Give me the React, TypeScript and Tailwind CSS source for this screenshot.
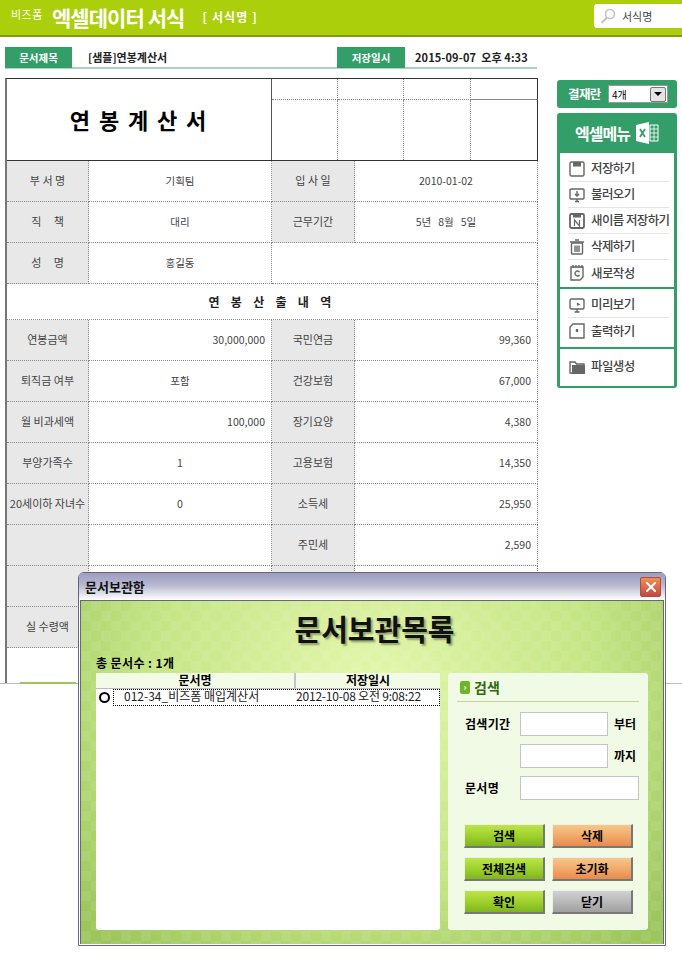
import type { ReactNode } from "react";
import { X } from "lucide-react";

const font = "font-['Noto_Sans_CJK_KR','Liberation_Sans',sans-serif]";

function Label({ children }: { children?: ReactNode }) {
  return (
    <div className="flex items-center justify-center border-r border-b border-dotted border-[#888] bg-[#e8e8e8] pb-[1px] text-[11px] whitespace-pre text-[#444]">
      {children}
    </div>
  );
}

function Value({ children, right }: { children?: ReactNode; right?: boolean }) {
  return (
    <div
      className={`flex items-center border-r border-b border-dotted border-[#888] pb-[1px] text-[10.5px] whitespace-pre text-[#444] ${
        right ? "justify-end pr-[6px]" : "justify-center"
      }`}
    >
      {children}
    </div>
  );
}

function MenuIcon({ name }: { name: string }) {
  const c = "#666";
  return (
    <svg width="18" height="18" viewBox="0 0 18 18" fill="none" stroke={c} strokeWidth="1.4" className="shrink-0">
      {name === "save" && (
        <>
          <rect x="2" y="2" width="14" height="14" rx="1.5" />
          <rect x="5" y="2" width="8" height="4.5" fill={c} stroke="none" />
        </>
      )}
      {name === "load" && (
        <>
          <rect x="2" y="3" width="14" height="10" rx="1" />
          <path d="M7 15.5h4M9 13v2.5M9 5v4.5M7 8l2 2 2-2" />
        </>
      )}
      {name === "saveas" && (
        <>
          <rect x="2" y="2" width="14" height="14" rx="1.5" strokeWidth="1.8" />
          <rect x="5" y="2" width="8" height="3.5" fill={c} stroke="none" />
          <path d="M6.5 14V8l5 6V8" strokeWidth="1.2" />
        </>
      )}
      {name === "trash" && (
        <>
          <rect x="3.5" y="5" width="11" height="11" rx="1" />
          <path d="M2 4h14M7 2h4M7 7.5v6.5M9 7.5v6.5M11 7.5v6.5" />
        </>
      )}
      {name === "new" && (
        <>
          <path d="M3 3h12v10l-3 3H3z" />
          <path d="M5 1v3M8 1v3M11 1v3M14 1v3M11.5 8a2.5 2.5 0 1 0 0 3" />
        </>
      )}
      {name === "preview" && (
        <>
          <rect x="2" y="3" width="14" height="10" rx="1.5" />
          <path d="M6.5 16h5M9 13v3M9 7l2 1.5-2 .5" />
        </>
      )}
      {name === "print" && (
        <>
          <path d="M5 2h11v14H2V5z" />
          <path d="M9 7v3" strokeWidth="2.4" />
        </>
      )}
      {name === "folder" && (
        <>
          <path d="M2 15V4h5l1.5 2H16v9z" fill="none" />
          <path d="M4 7h13v9H4z" fill={c} stroke="none" />
        </>
      )}
    </svg>
  );
}

function MenuRow({ icon, label, line }: { icon: string; label: string; line?: boolean }) {
  return (
    <div className="mx-[5px] flex h-[26px] items-center pl-[3px] text-[12.5px] font-medium tracking-[-0.6px] whitespace-nowrap text-[#444]">
      <div className={`flex h-full w-full items-center gap-[5px] ${line ? "border-b border-[#e4e4e4]" : ""}`}>
        <MenuIcon name={icon} />
        <span>{label}</span>
      </div>
    </div>
  );
}

function DialogButton({ label, tone }: { label: string; tone: "green" | "orange" | "gray" }) {
  const tones = {
    green: "bg-[linear-gradient(#bde548,#9ccf2c_55%,#7fb61d)]",
    orange: "bg-[linear-gradient(#f6c88a,#f0a868_55%,#ea8a4c)]",
    gray: "bg-[linear-gradient(#d2d2d2,#b6b6b6_55%,#a0a0a0)]",
  };
  return (
    <div
      className={`flex h-[24px] w-[81px] items-center justify-center border-t border-r-2 border-b-2 border-l border-t-[#eee] border-r-[#777] border-b-[#777] border-l-[#eee] text-[12px] font-bold text-black ${tones[tone]}`}
    >
      {label}
    </div>
  );
}

function SearchField({ label, unit, wide }: { label?: string; unit?: string; wide?: boolean }) {
  return (
    <div className="flex h-[24px] items-center text-[12px] font-bold text-black">
      <span className="w-[63px] pl-[8px] tracking-[0.3px] whitespace-nowrap">{label}</span>
      <div className={`h-[24px] border border-[#c4c4c4] bg-white ${wide ? "w-[120px]" : "w-[88px]"}`} />
      {unit && <span className="ml-[6px]">{unit}</span>}
    </div>
  );
}

export default function App() {
  const rows: [string, string, boolean, string, string][] = [
    ["연봉금액", "30,000,000", true, "국민연금", "99,360"],
    ["퇴직금 여부", "포함", false, "건강보험", "67,000"],
    ["월 비과세액", "100,000", true, "장기요양", "4,380"],
    ["부양가족수", "1", false, "고용보험", "14,350"],
    ["20세이하 자녀수", "0", false, "소득세", "25,950"],
    ["", "", false, "주민세", "2,590"],
    ["", "", false, "", ""],
    ["실 수령액", "", false, "", ""],
  ];

  return (
    <div className={`relative h-[962px] w-[682px] overflow-hidden bg-white ${font}`}>
      <div className="h-[684px] overflow-hidden border-b border-[#bbb]">
        {/* header */}
        <header className="flex h-[37px] items-start justify-between border-b-[2px] border-b-[#7f9a10] bg-[#abcf0a] text-white">
          <div className="flex items-center pt-[1px] pl-[11px]">
            <span className="mb-[6px] w-[41px] text-[11px] tracking-[0.5px]">비즈폼</span>
            <span className="text-[21px] leading-[32px] font-bold tracking-[-0.95px]">엑셀데이터 서식</span>
            <span className="ml-[18px] text-[12px] font-bold tracking-[1.1px] whitespace-pre">[ 서식명 ]</span>
          </div>
          <div className="mt-[4px] flex h-[24px] w-[88px] items-center gap-[6px] rounded-l-[3px] bg-white pl-[6px] text-[11px] text-[#444]">
            <svg width="16" height="16" viewBox="0 0 16 16" fill="none" stroke="#c4c4c4" strokeWidth="1.6">
              <circle cx="10" cy="6" r="4.5" />
              <path d="M7 9.5 1.5 15" strokeWidth="2.2" />
            </svg>
            <span>서식명</span>
          </div>
        </header>

        <div className="flex">
          <main className="w-[538px] shrink-0 pl-[5px]">
            {/* document bar */}
            <div className="mt-[10px] flex h-[22px] w-[532px] border-b-2 border-[#a5d5bb] text-[11px] font-bold">
              <div className="flex h-[21px] w-[67px] items-center justify-center bg-[#339e68] text-[10.5px] text-white">문서제목</div>
              <div className="ml-[16px] flex w-[249px] items-center text-[#222]">[샘플]연봉계산서</div>
              <div className="flex h-[21px] w-[68px] items-center justify-center bg-[#339e68] text-[10.5px] text-white">저장일시</div>
              <div className="ml-[10px] flex items-center tracking-[0.1px] whitespace-pre text-[#222]">2015-09-07  오후 4:33</div>
            </div>

            {/* form */}
            <div className="mt-[9px] w-[533px] border-t border-l-2 border-t-[#333] border-l-[#777]">
              <div className="grid h-[82px] grid-cols-[265px_266px] border-b border-[#333]">
                <div className="flex items-center justify-center border-r border-[#555] text-[22px] font-bold tracking-[1.9px] whitespace-pre text-black">
                  연 봉 계 산 서
                </div>
                <div className="grid grid-cols-[66px_66px_67px_67px] grid-rows-[21px_1fr]">
                  {Array.from({ length: 8 }).map((_, i) => (
                    <div
                      key={i}
                      className={`border-dotted border-[#888] ${i % 4 === 3 ? "border-r border-solid border-r-[#333]" : "border-r"} ${i < 4 ? "border-b" : ""}`}
                    />
                  ))}
                </div>
              </div>

              <div className="grid grid-cols-[82px_183px_83px_183px] [grid-auto-rows:41px]">
                <Label>부 서 명</Label>
                <Value>기획팀</Value>
                <Label>입 사 일</Label>
                <Value>2010-01-02</Value>
                <Label>{"직     책"}</Label>
                <Value>대리</Value>
                <Label>근무기간</Label>
                <Value>5년   8월   5일</Value>
                <Label>{"성     명"}</Label>
                <Value>홍길동</Value>
                <div className="col-span-2 border-r border-b border-dotted border-[#888]" />
              </div>

              <div className="flex h-[36px] items-center justify-center border-r border-b border-dotted border-[#888] text-[12px] font-bold tracking-[4.3px] whitespace-pre text-[#222]">
                연 봉 산 출 내 역
              </div>

              <div className="grid grid-cols-[82px_183px_83px_183px] [grid-auto-rows:41px]">
                {rows.map((r, i) => (
                  <div key={i} className="contents">
                    <Label>{r[0]}</Label>
                    <Value right={r[2]}>{r[1]}</Value>
                    <Label>{r[3]}</Label>
                    <Value right>{r[4]}</Value>
                  </div>
                ))}
              </div>
              <div className="h-[40px] border-r border-[#555]" />
            </div>
          </main>

          {/* side menu */}
          <aside className="ml-[19px] w-[120px] pt-[43px]">
            <div className="flex h-[28px] items-center rounded-[3px] bg-[#339e68] pl-[11px] text-white">
              <span className="w-[40px] text-[12.5px] font-bold tracking-[-0.6px]">결재란</span>
              <div className="flex h-[18px] w-[60px] items-center justify-between border border-[#999] bg-white pr-[1px] pl-[3px] text-[10px] text-black">
                <span>4개</span>
                <div className="flex h-[15px] w-[16px] items-center justify-center rounded-[2px] border border-[#777] bg-[#e4e4e4]">
                  <div className="h-0 w-0 border-x-[4px] border-t-[4px] border-x-transparent border-t-black" />
                </div>
              </div>
            </div>

            <div className="mt-[5px] rounded-[3px] bg-[#339e68] px-[3px] pb-[2px]">
              <div className="flex h-[40px] items-center justify-center gap-[5px] text-white">
                <span className="text-[16px] font-bold tracking-[-1px]">엑셀메뉴</span>
                <svg width="24" height="22" viewBox="0 0 24 22">
                  <path d="M1 3 14 0v22L1 19z" fill="#fff" />
                  <path d="M15 3h8v16h-8z" fill="none" stroke="#fff" />
                  <path d="M15 7h8M15 11h8M15 15h8M19 3v16" stroke="#fff" strokeWidth="0.8" />
                  <path d="m5 7 5 8M10 7l-5 8" stroke="#339e68" strokeWidth="1.8" />
                </svg>
              </div>
              <div className="h-[134px] bg-white pt-[3px]">
                <MenuRow icon="save" label="저장하기" line />
                <MenuRow icon="load" label="불러오기" line />
                <MenuRow icon="saveas" label="새이름 저장하기" line />
                <MenuRow icon="trash" label="삭제하기" line />
                <MenuRow icon="new" label="새로작성" />
              </div>
              <div className="mt-[2px] h-[58px] bg-white pt-[3px]">
                <MenuRow icon="preview" label="미리보기" line />
                <MenuRow icon="print" label="출력하기" />
              </div>
              <div className="mt-[2px] flex h-[37px] items-center bg-white pb-[2px]">
                <div className="w-full">
                  <MenuRow icon="folder" label="파일생성" />
                </div>
              </div>
            </div>
          </aside>
        </div>
      </div>

      <div className="absolute top-[682px] left-[20px] h-[2px] w-[56px] bg-[#9cc55c]" />

      {/* dialog window */}
      <div className="absolute top-[572px] left-[78px] flex h-[374px] w-[588px] flex-col rounded-t-[6px] border border-[#66667c] bg-white">
        <div className="flex h-[27px] items-center justify-between rounded-t-[5px] bg-[linear-gradient(#9c9cc0,#b8b8d0_45%,#fff)] pr-[4px] pl-[6px] text-[13px] font-bold text-[#111]">
          <span>문서보관함</span>
          <div className="flex h-[20px] w-[21px] items-center justify-center rounded-[2px] border border-[#b04a3a] bg-[linear-gradient(#f09050,#c04848)]">
            <X size={16} strokeWidth={3} color="#fff" />
          </div>
        </div>
        <div className="mx-[1px] mb-[1px] flex-1 border-x border-t border-[#66667c] bg-[repeating-conic-gradient(rgba(255,255,255,0.07)_0_25%,transparent_0_50%),radial-gradient(ellipse_at_50%_25%,#e4f7ad_0%,#c4e584_55%,#9cc55c_95%)] bg-[length:20px_20px,100%_100%] px-[15px]">
          <div className="flex h-[45px] items-end justify-center pl-[5px] text-[29px] leading-[36px] font-bold text-[#111] [text-shadow:2px_2px_2px_rgba(0,0,0,0.35)]">
            문서보관목록
          </div>
          <div className="mt-[7px] h-[20px] pt-[1px] text-[12px] font-bold tracking-[0.4px] text-black">총 문서수 : 1개</div>

          <div className="flex gap-[8px]">
            <div className="h-[257px] w-[344px] rounded-b-[3px] bg-white">
              <div className="flex h-[16px] border-b border-[#bbb] bg-[#f3fbe6] text-[12px] leading-[14px] font-bold text-black">
                <div className="w-[200px] border-r-2 border-[#c4c4c4] text-center">문서명</div>
                <div className="flex-1 text-center">저장일시</div>
              </div>
              <div className="flex items-center">
                <div className="ml-[3px] h-[11px] w-[11px] shrink-0 rounded-full border-2 border-black" />
                <div className="ml-[3px] flex h-[17px] flex-1 items-center border border-dotted border-black pb-[4px] text-[12px] whitespace-nowrap text-[#222]">
                  <span className="w-[182px] pl-[10px]">012-34_비즈폼 매입계산서</span>
                  <span className="tracking-[-0.2px]">2012-10-08 오전 9:08:22</span>
                </div>
              </div>
            </div>

            <div className="h-[257px] w-[200px] rounded-[3px] bg-[#f1fae4] px-[9px]">
              <div className="flex h-[29px] items-center gap-[4px] border-b border-[#c4d49c] pl-[3px] text-[14px] font-bold text-[#2f6a10]">
                <div className="flex h-[13px] w-[10px] items-center justify-center rounded-[2px] bg-[#6fb52c] text-[9px] leading-none text-white">›</div>
                <span>검색</span>
              </div>
              <div className="mt-[10px] flex flex-col gap-[8px]">
                <SearchField label="검색기간" unit="부터" />
                <SearchField unit="까지" />
                <SearchField label="문서명" wide />
              </div>
              <div className="mt-[24px] grid grid-cols-[81px_81px] gap-x-[7px] gap-y-[9px] pl-[7px]">
                <DialogButton label="검색" tone="green" />
                <DialogButton label="삭제" tone="orange" />
                <DialogButton label="전체검색" tone="green" />
                <DialogButton label="초기화" tone="orange" />
                <DialogButton label="확인" tone="green" />
                <DialogButton label="닫기" tone="gray" />
              </div>
            </div>
          </div>
        </div>
      </div>
    </div>
  );
}
